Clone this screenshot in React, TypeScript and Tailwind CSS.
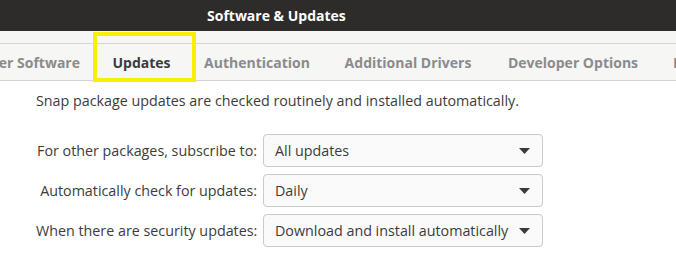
const tabs = [
  { label: "Other Software", cls: "w-[170px] -ml-[74px] text-right pr-[16px]" },
  { label: "Updates", cls: "w-[91px] text-center", active: true },
  { label: "Authentication", cls: "w-[140px] text-center" },
  { label: "Additional Drivers", cls: "w-[162px] text-center" },
  { label: "Developer Options", cls: "w-[168px] text-center" },
  { label: "Livepatch", cls: "w-[110px] text-left pl-[16px]" },
];

const rows = [
  { label: "For other packages, subscribe to:", value: "All updates" },
  { label: "Automatically check for updates:", value: "Daily" },
  { label: "When there are security updates:", value: "Download and install automatically" },
];

function Dropdown({ value }: { value: string }) {
  return (
    <div className="h-[33px] w-[280px] rounded-[4px] border border-[#cdc9c5] bg-[#fafafa] pl-[11px] pr-[12px] flex items-center justify-between text-[#3c3c3c]">
      <span>{value}</span>
      <svg width="11" height="6" viewBox="0 0 11 6" className="mt-[1px]">
        <path d="M0 0 L11 0 L5.5 6 Z" fill="#3a3a3a" />
      </svg>
    </div>
  );
}

export default function App() {
  return (
    <div
      className="relative w-[676px] h-[253px] overflow-hidden bg-white text-[14.3px]"
      style={{ fontFamily: '"Open Sans", "Noto Sans", sans-serif' }}
    >
      {/* title bar */}
      <div className="h-[31px] bg-[#2d2c2b] flex items-center pl-[207px] text-white font-bold text-[14px]">
        Software &amp; Updates
      </div>

      {/* tabs */}
      <div className="bg-[#f6f6f5] pt-[12px] text-[14px]">
        <div className="h-[38px] border-t border-b border-[#d6d4d2] flex items-center whitespace-nowrap font-bold">
          {tabs.map((t) => (
            <div
              key={t.label}
              className={`${t.cls} shrink-0 ${
                t.active ? "text-[#3b3b3b]" : "text-[#8b8b8b]"
              }`}
            >
              {t.label}
            </div>
          ))}
        </div>
      </div>

      {/* body */}
      <div className="pl-[36px] pt-[10px] text-[#3c3c3c]">
        <p className="leading-[20px]">
          Snap package updates are checked routinely and installed automatically.
        </p>
        <div className="mt-[23px] flex flex-col gap-[7px]">
          {rows.map((r) => (
            <div key={r.label} className="flex items-center">
              <div className="w-[221px] text-right whitespace-nowrap">{r.label}</div>
              <div className="ml-[6px]">
                <Dropdown value={r.value} />
              </div>
            </div>
          ))}
        </div>
      </div>

      {/* highlight annotation */}
      <div className="absolute left-[93px] top-[32px] w-[103px] h-[50px] border-4 border-[#f8f000]" />
    </div>
  );
}
